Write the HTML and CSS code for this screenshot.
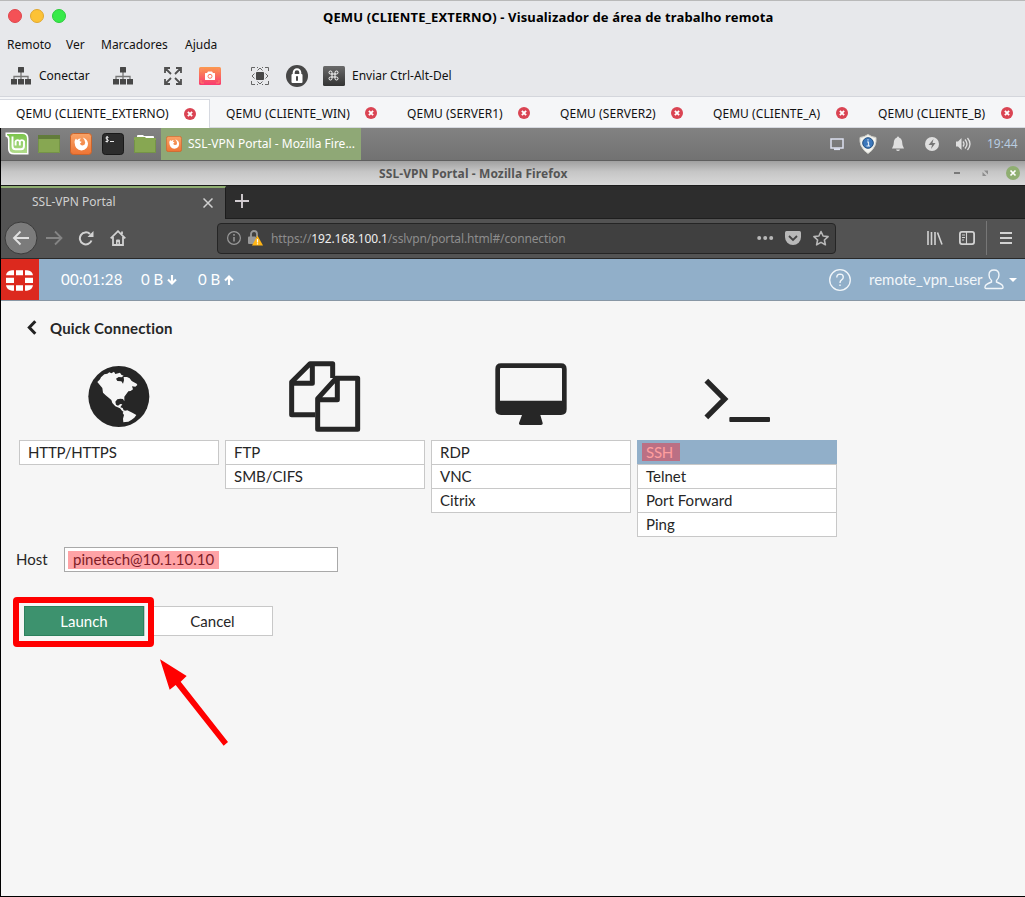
FILE: index.html
```
<!DOCTYPE html>
<html lang="pt-BR">
<head>
<meta charset="utf-8">
<title>QEMU (CLIENTE_EXTERNO)</title>
<link rel="stylesheet" href="styles.css">
</head>
<body>
<svg class="defs" aria-hidden="true">
  <defs>
    <linearGradient id="cam" x2="0" y2="1"><stop stop-color="#fb9a4f"/><stop offset="1" stop-color="#f93a70"/></linearGradient>
    <linearGradient id="key" x2="0" y2="1"><stop stop-color="#6a6a6a"/><stop offset="1" stop-color="#333"/></linearGradient>
    <linearGradient id="fox" x2="0" y2="1"><stop stop-color="#f9a468"/><stop offset="1" stop-color="#ee7434"/></linearGradient>
    <linearGradient id="mint" x2="0" y2="1"><stop stop-color="#7bc44c"/><stop offset="1" stop-color="#b1dc8b"/></linearGradient>
    <symbol id="net" viewBox="0 0 20 18"><path d="M10 5v9M3 14v-4.500h14V14" fill="none" stroke="#777" stroke-width="1.300"/><path d="M7.500 0h5q.5 0 .5.500v5H7V.500q0-.5.500-.5zM0 12h6v5.500H0zM7 12h6v5.500H7zM14 12h6v5.500h-6z" fill="#474747"/></symbol>
    <symbol id="close" viewBox="0 0 12 12"><circle cx="6" cy="6" r="6" fill="#da4453"/><path d="M3.900 3.900l4.200 4.200m0-4.200L3.900 8.100" stroke="#fff" stroke-width="1.900"/></symbol>
    <symbol id="firefox" viewBox="0 0 22 22"><rect x=".5" y=".5" width="21" height="21" rx="3" fill="url(#fox)" stroke="#c9642c"/><path fill-rule="evenodd" d="M4.500 9Q4.700 6.500 6 5.500q.3 1 1.200 1.400Q8.500 5.500 11 5.500 9.500 6.500 9.600 8q1 .6 2 .7-.3 1-1.600 1.500.3 2.300 2.500 2.300 2.500-.2 2.700-2.700.1-2.500-2.400-5.300 4.700 1.500 5.200 6 0 6.300-6.500 7-6.500-.3-7-8.500z" fill="#fff"/></symbol>
  </defs>
</svg>
<div class="host">
  <header class="host-title">
    <i class="dot red"></i><i class="dot yellow"></i><i class="dot green"></i>
    <h1><span>QEMU (CLIENTE_EXTERNO) - Visualizador de área de trabalho remota</span></h1>
  </header>
  <nav class="host-menu"><span class="m1">Remoto</span><span class="m2">Ver</span><span class="m3">Marcadores</span><span>Ajuda</span></nav>
  <div class="host-tools">
    <svg width="20" height="18"><use href="#net"/></svg><span class="connect">Conectar</span>
    <svg width="20" height="18"><use href="#net"/></svg>
    <svg class="full" width="18" height="18" viewBox="0 0 18 18" fill="none" stroke="#505050" stroke-width="1.800"><path d="M1 6V1h5M1 1l6 6M12 1h5v5M17 1l-6 6M1 12v5h5M1 17l6-6M12 17h5v-5M17 17l-6-6"/></svg>
    <svg class="camera" width="22" height="18" viewBox="0 0 22 18"><rect width="22" height="18" rx="1.500" fill="url(#cam)"/><path d="M2 5V2h3m12 0h3v3m0 8v3h-3M5 16H2v-3" fill="none" stroke="#ff8c6c" stroke-width=".8"/><path d="M6.500 6H8l1-1.500h4L14 6h1.500q.5 0 .5.500v6q0 .5-.5.500h-9q-.5 0-.5-.5v-6q0-.5.500-.5z" fill="#fff"/><circle cx="11" cy="9.300" r="2" fill="none" stroke="#fb7760"/></svg>
    <svg class="scale" width="18" height="18" viewBox="0 0 18 18" fill="none" stroke="#666"><path d="M.5 4V.500H4m2 0h1m4 0h1m2 0h3.500V4m0 10v3.500H14m-2 0h-1m-4 0H6m-2 0H.500V14M6.500 3.500 9 1l2.500 2.500M6.500 14.500l2.500 2.500 2.500-2.500M3.500 6.500 1 9l2.500 2.500M14.500 6.500l2.500 2.500-2.500 2.500"/><path d="M5.500 5.500h7v7h-7z" fill="#474747" stroke="#474747"/></svg>
    <svg class="lock" width="22" height="22" viewBox="0 0 22 22"><circle cx="11" cy="11" r="11" fill="#474747"/><rect x="5.500" y="9" width="11" height="9" rx="1" fill="#fff"/><path d="M7.700 10V7.500a3.300 3.300 0 0 1 6.600 0V10" fill="none" stroke="#fff" stroke-width="2"/><path d="M11 12v3" stroke="#474747" stroke-width="2" stroke-linecap="round"/></svg>
    <svg class="cmd" width="22" height="20" viewBox="0 0 22 20"><rect width="22" height="20" rx="1.500" fill="url(#key)"/><path d="M9 8H7.500A1.500 1.500 0 1 1 9 6.500v6A1.500 1.500 0 1 1 7.500 11h6a1.500 1.500 0 1 1-1.500 1.500v-6A1.500 1.500 0 1 1 13.500 8z" fill="none" stroke="#fff"/></svg>
    <span class="send">Enviar Ctrl-Alt-Del</span>
  </div>
  <div class="host-tabs">
    <div class="tab w1 on"><span>QEMU (CLIENTE_EXTERNO)</span><svg width="12" height="12"><use href="#close"/></svg></div>
    <div class="tab w2"><span>QEMU (CLIENTE_WIN)</span><svg width="12" height="12"><use href="#close"/></svg></div>
    <div class="tab w3"><span>QEMU (SERVER1)</span><svg width="12" height="12"><use href="#close"/></svg></div>
    <div class="tab w3"><span>QEMU (SERVER2)</span><svg width="12" height="12"><use href="#close"/></svg></div>
    <div class="tab w4"><span>QEMU (CLIENTE_A)</span><svg width="12" height="12"><use href="#close"/></svg></div>
    <div class="tab w5"><span>QEMU (CLIENTE_B)</span><svg width="12" height="12"><use href="#close"/></svg></div>
  </div>
</div>
<div class="guest">
  <div class="panel">
    <svg class="mint" width="24" height="24" viewBox="0 0 24 24"><path d="M.5.500H18q5.500 0 5.500 6v16H9q-6 0-6-5.500V7.500Q3 5 .5 4.500z" fill="#fff"/><path d="M2 2h15.500q4.500 0 4.500 5v14H9.500Q4.500 21 4.500 16.500V6Q4 3.500 2 3.200z" fill="url(#mint)"/><path d="M7.500 4.500V14q0 3.300 3 3.300h5.500q3 0 3-3.300V9.500a2.300 2.300 0 0 0-4.200 0v4m0-4a2.300 2.300 0 0 0-4.200 0v4" fill="none" stroke="#fff" stroke-width="1.900"/></svg>
    <svg width="22" height="20" viewBox="0 0 22 20"><path d="M0 1h22v18H0z" fill="#87a752"/><path d="M0 1h22v4H0z" fill="#627c3b"/><path d="M.5 5v13.500h21V5" fill="none" stroke="#759447"/></svg>
    <svg width="22" height="22"><use href="#firefox"/></svg>
    <svg width="22" height="22" viewBox="0 0 22 22"><rect x=".5" y=".5" width="21" height="21" rx="3" fill="#2d2d2d" stroke="#191919"/><path d="M6.500 4.500Q6 4 5 4T4 5t1 1.200T6.300 7.300 5 8.500 3.500 8M5.100 3v6.500M8 8.500h4" fill="none" stroke="#fff" stroke-width=".9"/></svg>
    <svg width="22" height="20" viewBox="0 0 22 20"><path d="M3 4V2q0-1 1-1h5l1 1h9q1 0 1 1v2H3z" fill="#fff"/><path d="M0 7V4q0-1 1-1h10l1 1h9q1 0 1 1v13q0 1-1 1H1q-1 0-1-1z" fill="#87a752"/><path d="M.5 6v12.500h21V6" fill="none" stroke="#759447"/></svg>
    <div class="task"><svg width="16" height="16"><use href="#firefox"/></svg><span>SSL-VPN Portal - Mozilla Fire...</span></div>
    <div class="tray">
      <svg width="14" height="14" viewBox="0 0 14 14"><path d="M1 2h12v9H1z" fill="none" stroke="#dce0ef" stroke-width="1.500"/><path d="M4 12.200h6" stroke="#dce0ef" stroke-width="1.800"/></svg>
      <svg class="shield" width="18" height="20" viewBox="0 0 18 20"><path d="M9 .500Q12.500 3 17 3.500q.5 4-1 8Q13.500 17 9 19.500 4.500 17 2 11.500q-1.500-4-1-8Q5.500 3 9 .500z" fill="#f4f4ef" stroke="#d0d0ca"/><circle cx="9" cy="9" r="5.300" fill="#3c78bc" stroke="#245080"/><path d="M8 8h1.500v4M7.500 12h3.500M9 5.200v1.300" fill="none" stroke="#dfebf8" stroke-width="1.200"/></svg>
      <svg class="bell" width="14" height="16" viewBox="0 0 14 16" fill="#dfdfdf"><path d="M6 1.500a1 1 0 0 1 2 0q2.500.700 3 3.500l.5 4 1.500 3.500H1L2.500 9 3 5q.5-2.800 3-3.500zM5 13.500h4Q8.500 15 7 15t-2-1.500z"/></svg>
      <svg class="bolt" width="14" height="14" viewBox="0 0 14 14"><circle cx="7" cy="7" r="7" fill="#dfdfdf"/><path d="M8.500 2 3.500 8H7l-1 4 4.500-6H7.500z" fill="#777"/></svg>
      <svg class="vol" width="17" height="14" viewBox="0 0 17 14"><path d="M1 4.500h2L6.500 1v12L3 9.500H1z" fill="#dfdfdf"/><path d="M8 4.500q2 2.500 0 5M10 2.500q4 4.500 0 9M12.500 1q5 6 0 12" fill="none" stroke="#dfdfdf" stroke-width="1.300"/></svg>
      <span class="clock">19:44</span>
    </div>
  </div>
  <div class="win-title"><span>SSL-VPN Portal - Mozilla Firefox</span>
    <svg width="67" height="14" viewBox="0 0 67 14"><path d="M1 7h6" stroke="#666" stroke-width="1.600"/><path d="M31 4.500h4v4zM29.500 6v4h4z" fill="#8d8d8d"/><circle cx="60" cy="7" r="7" fill="#8fae71"/><path d="M57.500 4.500l5 5m0-5l-5 5" stroke="#fff" stroke-width="1.700"/></svg>
  </div>
  <div class="ff-tabs">
    <div class="ff-tab"><span>SSL-VPN Portal</span><svg width="10" height="10" viewBox="0 0 10 10"><path d="M.5.500l9 9m0-9l-9 9" stroke="#d0d0d0" stroke-width="1.500"/></svg></div>
    <svg class="plus" width="14" height="14" viewBox="0 0 14 14"><path d="M7 0v14M0 7h14" stroke="#d2ccd0" stroke-width="1.900"/></svg>
  </div>
  <div class="ff-nav">
    <svg width="34" height="34" viewBox="0 0 34 34"><circle cx="17" cy="17" r="16" fill="#7b7b7b" stroke="#3b3b3b"/><path d="M25 17H10m6.500-6.500L10 17l6.500 6.500" fill="none" stroke="#e0e0e0" stroke-width="1.900"/></svg>
    <svg class="fwd" width="17" height="16" viewBox="0 0 17 16"><path d="M0 8h15M9 1.500 15.500 8 9 14.500" fill="none" stroke="#858585" stroke-width="1.800"/></svg>
    <svg class="reload" width="16" height="16" viewBox="0 0 16 16"><path d="M13.500 10.500A6 6 0 1 1 12 4" fill="none" stroke="#d2d2d2" stroke-width="2"/><path d="M15.500 1v6h-6z" fill="#d2d2d2"/></svg>
    <svg class="home" width="16" height="16" viewBox="0 0 16 16"><path d="M.7 8.300 8 1.200l7.300 7.100M3 7v8h10V7M12 4V1.500" fill="none" stroke="#d2d2d2" stroke-width="1.800"/><path d="M6 15v-4.500q0-1 1-1h2q1 0 1 1V15H8.500v-3h-1v3z" fill="#d2d2d2"/></svg>
    <div class="url">
      <svg width="14" height="14" viewBox="0 0 14 14"><circle cx="7" cy="7" r="6.400" fill="none" stroke="#999" stroke-width="1.200"/><path d="M7 6v4.500M7 3v1.700" stroke="#999" stroke-width="1.500"/></svg>
      <svg class="ssl" width="15" height="16" viewBox="0 0 15 16"><path d="M3 7V4a3 3 0 0 1 6 0v3" fill="none" stroke="#999" stroke-width="1.800"/><rect y="6.500" width="8" height="7.500" rx="1" fill="#999"/><path d="M9.500 5.500 15 15.500H4z" fill="#ffb515"/><path d="M9.500 9v3.500m0 .8v1.200" stroke="#fff" stroke-width="1.200"/></svg>
      <span class="addr">https://<b>192.168.100.1</b>/sslvpn/portal.html#/connection</span>
      <svg width="73" height="16" viewBox="0 0 73 16"><g fill="#b8b8b8"><circle cx="2.200" cy="8" r="2"/><circle cx="8.200" cy="8" r="2"/><circle cx="14.200" cy="8" r="2"/><path d="M29.500 1h13q1.500 0 1.500 1.500V7a8 8 0 0 1-16 0V2.500Q28 1 29.500 1z"/></g><path d="M32 6l4 4 4-4" fill="none" stroke="#444" stroke-width="1.800"/><path d="M64 1.500l2.100 4.500 5 .6-3.700 3.400 1 4.800L64 12.400l-4.400 2.400 1-4.800-3.700-3.400 5-.6z" fill="none" stroke="#b8b8b8" stroke-width="1.600" stroke-linejoin="round"/></svg>
    </div>
    <svg class="lib" width="16" height="14" viewBox="0 0 16 14"><path d="M1 0v14M4.500 1v13M8 1v13M10.500 1.500l4.500 12" stroke="#d2d2d2" stroke-width="1.600"/></svg>
    <svg class="side" width="16" height="14" viewBox="0 0 16 14"><rect x=".9" y=".9" width="14.200" height="12.200" rx="2" fill="none" stroke="#d2d2d2" stroke-width="1.800"/><path d="M7.500 1v12M3 4h3M3 6.500h3M3 9h2" stroke="#d2d2d2" stroke-width="1.100"/></svg>
    <i class="sep"></i>
    <svg width="12" height="12" viewBox="0 0 12 12"><path d="M0 1h12M0 6h12M0 11h12" stroke="#d2d2d2" stroke-width="2"/></svg>
  </div>
  <main class="portal">
    <header class="bar">
      <div class="forti"><svg width="27" height="21" viewBox="0 0 81 63" fill="#fff"><path d="M0 16Q2 2 18 1h6v15zM30 1h21v15H30zM57 1h6q16 1 18 15H57zM0 23h24v16H0zM57 23h24v16H57zM0 46h24v16h-6Q2 61 0 46zM30 46h21v16H30zM57 46h24q-2 15-18 16h-6z"/></svg></div>
      <span class="time">00:01:28</span>
      <span class="down">0 B</span><svg width="10" height="10" viewBox="0 0 10 10"><path d="M5 0v8M1 4.500l4 4 4-4" fill="none" stroke="#fff" stroke-width="2.100"/></svg>
      <span class="up">0 B</span><svg width="10" height="10" viewBox="0 0 10 10"><path d="M5 10V2M1 5.500l4-4 4 4" fill="none" stroke="#fff" stroke-width="2.100"/></svg>
      <svg class="help" width="22" height="22" viewBox="0 0 22 22"><circle cx="11" cy="11" r="10.300" fill="none" stroke="#f1f6fa" stroke-width="1.300"/><path d="M7.800 8.500q0-3.400 3.300-3.400 3.200.1 3.200 3 0 1.700-1.700 2.700Q11 11.800 11 14m0 1.500v1.600" fill="none" stroke="#f1f6fa" stroke-width="1.400"/></svg>
      <span class="user">remote_vpn_user</span>
      <svg class="person" width="20" height="21" viewBox="0 0 20 21"><path d="M7.500 13V11.500Q5 9.500 5 6q0-5 5-5t5 5q0 3.500-2.500 5.500V13q5 2 6 3.500 1.300 3-.5 3H2q-1.800 0-.5-3 1-1.500 6-3.500z" fill="none" stroke="#f1f6fa" stroke-width="1.400"/></svg>
      <i class="caret"></i>
    </header>
    <h2><svg width="10" height="15" viewBox="0 0 10 15"><path d="M8.300 1.200 2.300 7.500l6 6.300" fill="none" stroke="#222" stroke-width="3"/></svg><span>Quick Connection</span></h2>
    <section class="types">
      <div class="type"><svg width="200" height="80" viewBox="57 30 600 240"><circle cx="356.500" cy="139.500" r="91.500" fill="#262626"/><path transform="translate(252 36)" fill="#f6f6f6" d="M40 60l8-8 3-6 10-9 9-2 6-4 6 3 8-5 4 7 14-4 4 6 7 3-6 5-9-1-8 5 4 7 12 1 5 7 3-10-1-10 10 0 8 4 6 8 15 8 2 4-6 5-10-1 3 9-7 5-7 1-6 8-6 8 0 14-4-7-8-1-9 2-6 7 2 9 6 3 7-5 6 1-6 9 7 2 3 7 7 3-6 3-6-5-6-7-14-6-9-10-3-9-8-7-9-7-8-8-2-14-7-8zM120 147l10-2 9 4 6 3 12 7-6 8-8 6-10 6-9 1-6 1-1-11 3-11-4-6z"/></svg><ul><li class="tight">HTTP/HTTPS</li></ul></div>
      <div class="type"><svg width="200" height="80" viewBox="675 30 600 240"><g fill="none" stroke="#262626" stroke-width="15" stroke-linejoin="round"><path d="M946 194H875V96l55-55h68v43M875 100h62V41"/><path d="M953 146l55-61h65v153H953zM953 149h59V85"/></g></svg><ul><li>FTP</li><li>SMB/CIFS</li></ul></div>
      <div class="type"><svg width="200" height="80" viewBox="3 30 600 240"><path d="M213 40h180q17 0 17 17v121q0 17-17 17H331l7 24q1 6-5 6H272q-6 0-5-6l9-24H213q-17 0-17-17V57q0-17 17-17z" fill="#262626"/><path d="M213 54h180q3 0 3 3v95H210V57q0-3 3-3z" fill="#f6f6f6"/></svg><ul><li>RDP</li><li>VNC</li><li>Citrix</li></ul></div>
      <div class="type"><svg width="200" height="80" viewBox="621 30 600 240"><path d="M829 92l55 55-55 55" fill="none" stroke="#262626" stroke-width="16"/><rect x="898" y="201" width="122" height="15" rx="3" fill="#262626"/></svg><ul><li class="sel"><mark>SSH</mark></li><li>Telnet</li><li>Port Forward</li><li>Ping</li></ul></div>
    </section>
    <div class="host-row"><label>Host</label><div class="input"><mark>pinetech@10.1.10.10</mark></div></div>
    <div class="actions"><div class="btn launch"><span>Launch</span></div><div class="btn cancel"><span>Cancel</span></div><i class="ring"></i></div>
    <svg class="pointer" width="70" height="90" viewBox="480 386 210 270"><path d="M480 387l80 50-18 17 142 181-13 11-144-182-18 14z" fill="#f00"/></svg>
  </main>
</div>
</body>
</html>
```
FILE: styles.css
```
* { box-sizing: border-box; }
body { margin: 0; width: 1025px; height: 897px; overflow: hidden; background: #f6f6f6; font: 12px/16px "Noto Sans", sans-serif; color: #111; }
svg { display: block; flex: none; }
span, label { white-space: nowrap; }
.defs { position: absolute; width: 0; height: 0; }
.host { height: 128px; background: #e7e8eb; border-top: 1px solid #b9b9b9; }
.host-title { display: flex; align-items: center; height: 33px; padding: 0 8px; gap: 8px; }
.dot { width: 14px; height: 14px; border-radius: 50%; flex: none; margin-top: -4px; }
.red { background: #f45156; border: 1px solid #df464c; }
.yellow { background: #fcc236; border: 1px solid #e0a730; }
.green { background: #38ea49; border: 1px solid #2dcc3c; }
.host-title h1 { flex: 1; margin: -1px 0 0 249px; font-size: 13px; line-height: 20px; letter-spacing: .14px; color: #000; }
.host-menu { display: flex; height: 20px; padding: 2px 0 0 7px; align-items: center; }
.m1 { width: 59px; } .m2 { width: 35px; } .m3 { width: 84px; }
.host-tools { display: flex; height: 42px; padding: 2px 0 0 11px; align-items: center; }
.connect { width: 74px; padding-left: 8px; margin-right: 8px; }
.full { margin-left: 31px; } .camera { margin-left: 17px; } .scale { margin-left: 30px; } .lock { margin-left: 17px; } .cmd { margin-left: 15px; } .send { margin-left: 7px; }
.host-tabs { display: flex; height: 32px; background: #f5f6f8; border-top: 1px solid #d4d6dc; letter-spacing: .06px; }
.tab { display: flex; justify-content: space-between; align-items: center; flex: none; padding: 3px 14px 0 16px; border-bottom: 1px solid #d6d9e0; }
.tab svg { margin-top: -1px; }
.tab.on { background: #fff; border: solid #d6d9e0; border-width: 1px 1px 0 0; margin-top: 2px; padding: 0 13px 0 16px; }
.w1 { width: 210px; } .w2 { width: 181px; } .w3 { width: 153px; } .w4 { width: 165px; } .w5 { width: 163px; padding-right: 12px; }
.guest { height: 769px; border-left: 1px solid #000; border-bottom: 1px solid #000; }
.panel { display: flex; height: 33px; padding-left: 4px; gap: 10px; align-items: center; background: linear-gradient(#828282, #727272); border-bottom: 1px solid #5f5f5f; }
.mint { margin-right: -1px; margin-top: -1px; }
.task { display: flex; align-items: center; width: 200px; height: 32px; margin-left: -5px; background: #8fa876; color: #fff; gap: 6px; padding-left: 5px; }
.tray { display: flex; flex: 1; align-items: center; padding-left: 459px; color: #b8cce0; }
.shield { margin-left: 15px; } .bell { margin-left: 14px; } .bolt { margin-left: 20px; } .vol { margin-left: 16px; } .clock { margin-left: 15px; }
.win-title { display: flex; align-items: center; justify-content: flex-end; height: 24px; background: linear-gradient(#a0a0a0, #c6c6c6 45%, #d8d8d8); color: #555; font-weight: bold; padding-right: 5px; }
.win-title span { width: 189px; margin: 1px 385px 0 0; letter-spacing: .1px; }
.ff-tabs { display: flex; align-items: center; height: 33px; background: #2d2d2d; border-top: 1px solid #1c1c1c; color: #d0d0d0; }
.ff-tab { display: flex; align-items: center; justify-content: space-between; width: 225px; height: 32px; background: #535353; border-top: 2px solid #8fae71; border-right: 1px solid #1c1c1c; padding: 0 12px 0 31px; }
.ff-tab span { margin-top: -2px; }
.plus { margin-left: 9px; margin-top: -2px; }
.ff-nav { display: flex; align-items: center; height: 41px; background: linear-gradient(90deg, #535353 224px, #1e1e1e 224px) 0 0 / 100% 1px no-repeat #535353; border-bottom: 1px solid #292929; padding-left: 3px; }
.fwd { margin-left: 8px; } .reload { margin-left: 15px; } .home { margin-left: 16px; }
.url { display: flex; align-items: center; width: 619px; height: 31px; margin-left: 91px; background: #404040; border: 1px solid #252525; border-radius: 4px; padding-left: 9px; color: #8d8d8d; }
.ssl { margin-left: 7px; }
.addr { width: 494px; padding: 1px 0 0 8px; letter-spacing: -.14px; }
.addr b { font-weight: normal; color: #eee; }
.lib { margin-left: 91px; } .side { margin-left: 16px; }
.sep { width: 1px; height: 34px; margin: 0 13px 0 11px; background: #777; }
.portal { font: 15px/20px Lato, sans-serif; color: #262626; }
.bar { display: flex; align-items: center; height: 42px; background: #91afc9; border-bottom: 1px solid #8897a5; color: #fff; }
.bar > span { margin-top: -2px; }
.forti { display: flex; width: 38px; height: 41px; align-items: center; padding: 1px 0 0 5px; background: #dc291e; }
.time { width: 80px; margin-left: 22px; letter-spacing: .25px; } .down, .up { width: 26px; } .up { margin-left: 21px; }
.help { margin-left: 595px; } .user { width: 113px; margin-left: 18px; color: #f1f6fa; } .person { margin-left: 2px; }
.caret { border: 4px solid transparent; border-top-color: #fff; border-bottom: 0; margin-left: 5px; }
h2 { display: flex; align-items: center; gap: 13px; margin: 16px 0 0 26px; height: 22px; font-size: 15px; line-height: 22px; letter-spacing: .15px; }
h2 svg { margin-top: -2px; }
.types { display: flex; gap: 6px; height: 187px; margin: 21px 0 0 18px; }
.type { width: 200px; }
ul { list-style: none; margin: 0; padding: 0; }
li { height: 25px; margin-bottom: -1px; border: 1px solid #c8c8c8; background: #fff; padding: 1px 8px; }
.tight { letter-spacing: -.2px; }
.sel { background: #91afc9; border-color: #91afc9 #91afc9 #c8c8c8; }
mark { display: inline-block; background: #ffa3a6; color: #801d28; }
.sel mark { background: #bb7084; color: #ff9e9e; width: 38px; height: 18px; line-height: 18px; letter-spacing: -.2px; margin: 1px 0 0 -4px; padding-left: 4px; vertical-align: top; }
.host-row { display: flex; align-items: center; height: 25px; }
.host-row label { width: 48px; margin: -2px 0 0 15px; }
.input { width: 274px; height: 25px; border: 1px solid #a9a9a9; background: #fff; padding: 3px; }
.input mark { display: block; width: 151px; height: 18px; line-height: 16px; padding-left: 5px; }
.actions { position: relative; display: flex; margin: 34px 0 0 23px; }
.btn { display: flex; align-items: center; justify-content: center; height: 30px; }
.launch { width: 120px; background: #3d926e; border: 1px solid #2c805d; color: #fff; }
.cancel { width: 129px; background: #fff; border: 1px solid #c8c8c8; padding-left: 8px; }
.ring { position: absolute; left: -11px; top: -9px; width: 141px; height: 50px; border: 6px solid #f00; border-radius: 4px; box-shadow: inset 0 0 0 3px #f6f6f6; }
.pointer { margin: 23px 0 0 159px; }
```
